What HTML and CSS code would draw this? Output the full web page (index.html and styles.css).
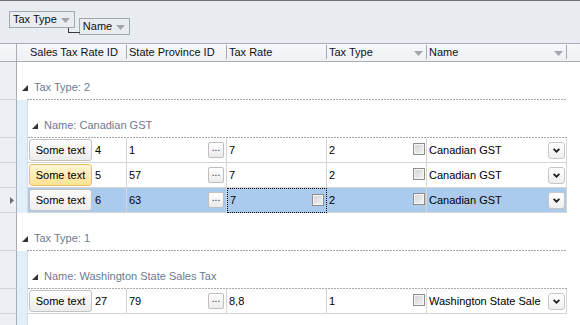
FILE: index.html
```html
<!DOCTYPE html>
<html>
<head>
<meta charset="utf-8">
<link rel="stylesheet" href="styles.css">
</head>
<body>
<div class="grid">
  <div class="group-panel">
    <div class="chip">Tax Type<svg class="ftri" width="9" height="5" viewBox="0 0 9 5"><path d="M0 0h9L4.5 5z"/></svg></div>
    <div class="chip chip-sub">Name<svg class="ftri" width="9" height="5" viewBox="0 0 9 5"><path d="M0 0h9L4.5 5z"/></svg></div>
  </div>

  <div class="header">
    <div class="ind"></div>
    <div class="hspace"></div>
    <div class="hcell ca">Sales Tax Rate ID</div>
    <div class="hcell cb">State Province ID</div>
    <div class="hcell cc">Tax Rate</div>
    <div class="hcell cd">Tax Type<svg class="ftri htri" width="9" height="5" viewBox="0 0 9 5"><path d="M0 0h9L4.5 5z"/></svg></div>
    <div class="hcell ce">Name<svg class="ftri htri" width="9" height="5" viewBox="0 0 9 5"><path d="M0 0h9L4.5 5z"/></svg></div>
    <div class="hrest"></div>
  </div>

  <div class="rows">
    <div class="row grp grp1">
      <div class="ind"></div>
      <div class="gbody"><svg class="exp" width="6" height="6" viewBox="0 0 6 6"><path d="M6 0V6H0z"/></svg><span>Tax Type: 2</span></div>
    </div>
    <div class="row grp grp2">
      <div class="ind"></div>
      <div class="strip"></div>
      <div class="gbody"><svg class="exp" width="6" height="6" viewBox="0 0 6 6"><path d="M6 0V6H0z"/></svg><span>Name: Canadian GST</span></div>
    </div>

    <div class="row data">
      <div class="ind"></div>
      <div class="strip"></div>
      <div class="cell ca"><button class="btn">Some text</button><span class="idv">4</span></div>
      <div class="cell cb"><span>1</span><span class="ell">...</span></div>
      <div class="cell cc"><span>7</span></div>
      <div class="cell cd"><span>2</span><span class="chk"></span></div>
      <div class="cell ce"><span>Canadian GST</span><span class="dd"><svg width="7" height="5" viewBox="0 0 7 5"><path d="M0.6 0.8L3.5 3.7L6.4 0.8"/></svg></span></div>
    </div>
    <div class="row data">
      <div class="ind"></div>
      <div class="strip"></div>
      <div class="cell ca"><button class="btn hot">Some text</button><span class="idv">5</span></div>
      <div class="cell cb"><span>57</span><span class="ell">...</span></div>
      <div class="cell cc"><span>7</span></div>
      <div class="cell cd"><span>2</span><span class="chk"></span></div>
      <div class="cell ce"><span>Canadian GST</span><span class="dd"><svg width="7" height="5" viewBox="0 0 7 5"><path d="M0.6 0.8L3.5 3.7L6.4 0.8"/></svg></span></div>
    </div>
    <div class="row data sel">
      <div class="ind"><svg class="cur" width="4" height="7" viewBox="0 0 4 7"><path d="M0 0L4 3.5L0 7z"/></svg></div>
      <div class="strip"></div>
      <div class="cell ca"><button class="btn">Some text</button><span class="idv">6</span></div>
      <div class="cell cb"><span>63</span><span class="ell">...</span></div>
      <div class="cell cc current"><span>7</span><span class="chk chk-c"></span></div>
      <div class="cell cd"><span>2</span><span class="chk"></span></div>
      <div class="cell ce"><span>Canadian GST</span><span class="dd"><svg width="7" height="5" viewBox="0 0 7 5"><path d="M0.6 0.8L3.5 3.7L6.4 0.8"/></svg></span></div>
    </div>

    <div class="row grp grp1">
      <div class="ind"></div>
      <div class="gbody"><svg class="exp" width="6" height="6" viewBox="0 0 6 6"><path d="M6 0V6H0z"/></svg><span>Tax Type: 1</span></div>
    </div>
    <div class="row grp grp2">
      <div class="ind"></div>
      <div class="strip"></div>
      <div class="gbody"><svg class="exp" width="6" height="6" viewBox="0 0 6 6"><path d="M6 0V6H0z"/></svg><span>Name: Washington State Sales Tax</span></div>
    </div>
    <div class="row data">
      <div class="ind"></div>
      <div class="strip"></div>
      <div class="cell ca"><button class="btn">Some text</button><span class="idv">27</span></div>
      <div class="cell cb"><span>79</span><span class="ell">...</span></div>
      <div class="cell cc"><span>8,8</span></div>
      <div class="cell cd"><span>1</span><span class="chk"></span></div>
      <div class="cell ce"><span class="clip">Washington State Sale</span><span class="dd"><svg width="7" height="5" viewBox="0 0 7 5"><path d="M0.6 0.8L3.5 3.7L6.4 0.8"/></svg></span></div>
    </div>

    <div class="row filler">
      <div class="ind"></div>
      <div class="strip"></div>
    </div>
  </div>
</div>
</body>
</html>
```

FILE: styles.css
```css
* { box-sizing: border-box; }
html, body { margin: 0; padding: 0; }
body {
  width: 580px;
  height: 325px;
  overflow: hidden;
  background: #ffffff;
  font: 11px/13px "Liberation Sans", Arial, sans-serif;
  color: #000;
}
.grid { display: flex; flex-direction: column; height: 325px; }

/* group panel */
.group-panel {
  height: 43px;
  flex: none;
  border-top: 1px solid #6f6f6f;
  background: #e9ecf0;
  display: flex;
  align-items: flex-start;
  padding: 10px 0 0 9px;
}
.chip {
  display: flex;
  align-items: center;
  height: 17px;
  border: 1px solid #a3a8ae;
  padding: 0 4px 0 3px;
  color: #111;
}
.ftri { fill: #a2a6ab; margin-left: 4px; margin-top: 1px; }
.chip-sub { margin-left: 4px; margin-top: 7px; position: relative; }
.chip-sub::before {
  content: "";
  position: absolute;
  left: -12px;
  top: 9px;
  width: 11px;
  height: 4px;
  border-left: 1px solid #3a3a3a;
  border-bottom: 1px solid #3a3a3a;
}

/* header */
.header {
  display: flex;
  flex: none;
  height: 19px;
  border-top: 1px solid #a9aeb5;
  border-bottom: 1px solid #a9aeb5;
  background: linear-gradient(#f6f7f9, #eef1f5);
}
.header .ind { height: 17px; background: transparent; border-bottom: none; }
.hspace { width: 11px; flex: none; }
.hcell {
  flex: none;
  position: relative;
  display: flex;
  align-items: center;
  padding-left: 2px;
  color: #111;
}
.hcell::after {
  content: "";
  position: absolute;
  right: 0;
  top: 1px;
  width: 1px;
  height: 14px;
  background: #a7abb1;
}
.htri { margin-left: auto; margin-right: 4px; }
.hrest { flex: 1; }

.ca { width: 99px; }
.cb { width: 100px; }
.cc { width: 100px; }
.cd { width: 100px; }
.ce { width: 140px; }

/* rows */
.rows { display: flex; flex-direction: column; flex: 1; width: 567px; }
.row { display: flex; flex: none; }
.ind {
  width: 17px;
  flex: none;
  border-right: 1px solid #a8adb4;
  border-bottom: 1px solid #d2d6db;
  background: #eceff3;
  display: flex;
  align-items: center;
}
.strip {
  width: 11px;
  flex: none;
  background: #e3eefb;
  border-right: 1px solid #d4dce6;
}

.grp { height: 38px; }
.grp .ind { height: 38px; }
.gbody {
  flex: 1;
  display: flex;
  align-items: center;
  align-self: stretch;
  padding-top: 12px;
  color: #6b7b8e;
}
.grp1 .gbody {
  padding-left: 5px;
  background: repeating-linear-gradient(90deg, #a8a8a8 0 2px, transparent 2px 3px) right bottom / calc(100% - 10px) 1px no-repeat;
}
.grp2 .gbody {
  padding-left: 4px;
  background: repeating-linear-gradient(90deg, #a8a8a8 0 2px, transparent 2px 3px) right bottom / 100% 1px no-repeat;
}
.exp { fill: #333; margin-right: 6px; margin-top: 1px; }

.data { height: 25px; }
.data .ind { height: 25px; }
.cell {
  flex: none;
  height: 25px;
  display: flex;
  align-items: center;
  padding-left: 2px;
  border-right: 1px solid #d6d6d6;
  border-bottom: 1px solid #d6d6d6;
}
.cell.ca { padding-left: 1px; }
.sel .cell { background: #aacbee; }
.cur { fill: #6e6e6e; margin-left: 10px; }

.btn {
  font: inherit;
  color: #000;
  width: 63px;
  height: 22px;
  padding: 0;
  border: 1px solid #c3c3c3;
  border-radius: 3px;
  background: linear-gradient(#fdfdfd, #ececec);
}
.btn.hot {
  border-color: #e5c266;
  background: linear-gradient(#fff6d4, #fde390);
}
.idv { margin-left: 3px; }

.ell {
  margin-left: auto;
  margin-right: 2px;
  width: 16px;
  height: 16px;
  border: 1px solid #bfbfbf;
  border-radius: 2px;
  background: linear-gradient(#ffffff, #ebebeb);
  font-size: 10px;
  line-height: 10px;
  text-align: center;
  color: #222;
  margin-top: -1px;
}
.chk {
  margin-left: auto;
  margin-right: 1px;
  margin-bottom: 2px;
  width: 12px;
  height: 12px;
  border: 1px solid #8e8e8e;
  box-shadow: inset 0 0 0 1px #f6f6f6;
  background: linear-gradient(135deg, #d3d3d3, #f3f3f3);
}
.chk-c { margin-right: 2px; }
.current { border: 1px dotted #000; }
.dd {
  margin-left: auto;
  margin-right: 1px;
  width: 17px;
  height: 17px;
  border: 1px solid #c7c7c7;
  border-radius: 3px;
  background: linear-gradient(#ffffff, #efefef);
  display: flex;
  align-items: center;
  justify-content: center;
}
.dd path { fill: none; stroke: #1e1e1e; stroke-width: 1.7; }
.clip { white-space: nowrap; overflow: hidden; }

.filler { flex: 1; }
.filler .ind { border-bottom: none; }
```
